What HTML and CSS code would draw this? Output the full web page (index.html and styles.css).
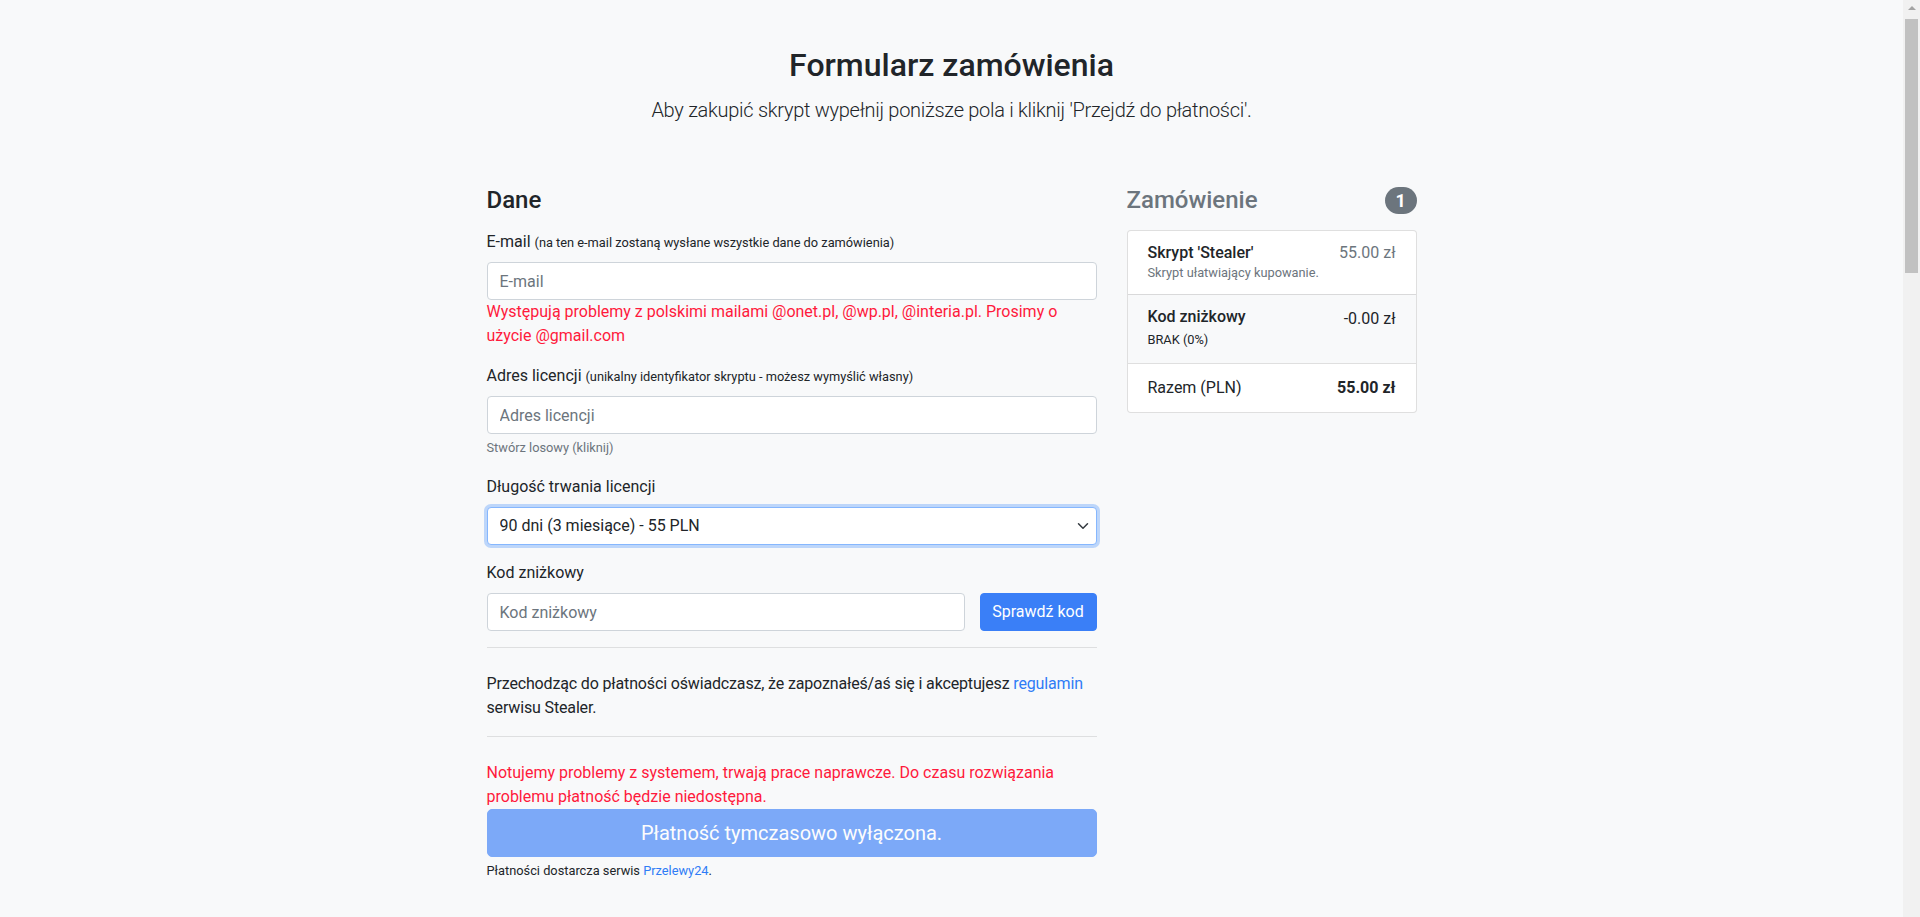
FILE: index.html
```html
<!DOCTYPE html>
<html lang="pl">
<head>
<meta charset="utf-8">
<title>Formularz zamówienia</title>
<link rel="stylesheet" href="styles.css">
</head>
<body>
<div class="page">
  <div class="container">
    <header class="hero">
      <h2 class="hero-title">Formularz zamówienia</h2>
      <p class="lead">Aby zakupić skrypt wypełnij poniższe pola i kliknij 'Przejdź do płatności'.</p>
    </header>

    <div class="row">
      <main class="col-main">
        <h4 class="section-title">Dane</h4>
        <form class="order-form">
          <div class="field">
            <label class="field-label">E-mail <small class="label-note">(na ten e-mail zostaną wysłane wszystkie dane do zamówienia)</small></label>
            <input class="form-control" type="text" placeholder="E-mail">
            <p class="danger-text">Występują problemy z polskimi mailami @onet.pl, @wp.pl, @interia.pl. Prosimy o użycie @gmail.com</p>
          </div>

          <div class="field field-hint">
            <label class="field-label">Adres licencji <small class="label-note">(unikalny identyfikator skryptu - możesz wymyślić własny)</small></label>
            <input class="form-control" type="text" placeholder="Adres licencji">
            <small class="form-text">Stwórz losowy (kliknij)</small>
          </div>

          <div class="field">
            <label class="field-label">Długość trwania licencji</label>
            <div class="select-wrap">
              <select class="form-control form-select is-focused">
                <option>90 dni (3 miesiące) - 55 PLN</option>
              </select>
              <svg class="select-arrow" viewBox="0 0 16 16" width="12" height="12" aria-hidden="true"><path d="M2 5l6 6 6-6" fill="none" stroke="#343a40" stroke-width="2" stroke-linecap="round" stroke-linejoin="round"/></svg>
            </div>
          </div>

          <div class="field">
            <label class="field-label">Kod zniżkowy</label>
            <div class="code-row">
              <input class="form-control code-input" type="text" placeholder="Kod zniżkowy">
              <button type="button" class="btn btn-primary code-btn">Sprawdź kod</button>
            </div>
          </div>

          <hr class="divider">

          <p class="terms">Przechodząc do płatności oświadczasz, że zapoznałeś/aś się i akceptujesz <a class="link" href="#">regulamin</a> serwisu Stealer.</p>

          <hr class="divider">

          <p class="danger-text">Notujemy problemy z systemem, trwają prace naprawcze. Do czasu rozwiązania problemu płatność będzie niedostępna.</p>
          <button type="button" class="btn btn-primary btn-lg btn-block" disabled>Płatność tymczasowo wyłączona.</button>
          <small class="provider">Płatności dostarcza serwis <a class="link" href="#">Przelewy24</a>.</small>
        </form>
      </main>

      <aside class="col-side">
        <h4 class="side-title"><span>Zamówienie</span><span class="badge">1</span></h4>
        <ul class="list-group">
          <li class="list-item condensed">
            <div>
              <h6 class="item-title">Skrypt 'Stealer'</h6>
              <small class="muted">Skrypt ułatwiający kupowanie.</small>
            </div>
            <span class="muted">55.00 zł</span>
          </li>
          <li class="list-item item-light">
            <div>
              <h6 class="item-title">Kod zniżkowy</h6>
              <small>BRAK (0%)</small>
            </div>
            <span>-0.00 zł</span>
          </li>
          <li class="list-item">
            <span>Razem (PLN)</span>
            <strong>55.00 zł</strong>
          </li>
        </ul>
      </aside>
    </div>
  </div>
</div>

<div class="scrollbar" aria-hidden="true">
  <svg class="scroll-arrow" viewBox="0 0 8 4" width="8" height="4"><path d="M0 4L4 0L8 4Z" fill="#a3a3a3"/></svg>
  <div class="scroll-thumb"></div>
</div>
</body>
</html>
```

FILE: styles.css
```css
body {
  margin: 0;
  background: #f8f9fa;
  color: #212529;
  font-family: "Segoe UI", Roboto, "Helvetica Neue", Arial, "Noto Sans", sans-serif;
  font-size: 16px;
  line-height: 1.5;
}

.page {
  margin-right: 17px;
}

.scrollbar {
  position: fixed;
  top: 0;
  right: 0;
  width: 17px;
  height: 100%;
  background: #f1f1f1;
  display: flex;
  flex-direction: column;
  align-items: center;
}

.scroll-arrow {
  margin-top: 6px;
  width: 8px;
  height: 4px;
}

.scroll-thumb {
  margin-top: 9px;
  width: 13px;
  height: 254px;
  background: #c1c1c1;
}

.container {
  max-width: 960px;
  margin: 0 auto;
  padding: 0 15px;
  box-sizing: border-box;
}

.hero {
  text-align: center;
  padding: 46px 0 45px;
}

.hero-title {
  margin: 0 0 11px;
  font-size: 32px;
  font-weight: 500;
  line-height: 1.2;
}

.lead {
  margin: 0 0 16px;
  font-size: 20px;
  font-weight: 300;
  letter-spacing: -0.28px;
}

.row {
  display: flex;
  gap: 30px;
  align-items: flex-start;
}

.col-main {
  flex: 0 0 610px;
}

.col-side {
  flex: 0 0 290px;
}

.section-title {
  margin: 0 0 15px;
  font-size: 24px;
  font-weight: 500;
  line-height: 1.2;
}

.field {
  margin-bottom: 16px;
}

.field-hint {
  margin-bottom: 18px;
}

.field-label {
  display: inline-block;
  margin-bottom: 8px;
}

.label-note {
  font-size: 80%;
}

.form-control {
  display: block;
  width: 100%;
  height: 38px;
  box-sizing: border-box;
  padding: 6px 12px;
  font-family: inherit;
  font-size: 16px;
  line-height: 1.5;
  color: #212529;
  background: #fff;
  border: 1px solid #ced4da;
  border-radius: 4px;
  outline: none;
}

.form-control::placeholder {
  color: #6c757d;
  opacity: 1;
}

.select-wrap {
  position: relative;
}

.form-select {
  appearance: none;
  -webkit-appearance: none;
  padding-right: 36px;
}

.is-focused {
  border-color: #86b7fe;
  box-shadow: 0 0 0 3px rgba(13, 110, 253, 0.25);
}

.select-arrow {
  position: absolute;
  right: 8px;
  top: 13px;
  width: 12px;
  height: 12px;
  pointer-events: none;
}

.danger-text {
  margin: 0;
  color: #ff1a3c;
}

.form-text {
  display: block;
  margin-top: 4px;
  font-size: 12.8px;
  color: #6c757d;
}

.code-row {
  display: flex;
  gap: 15px;
}

.code-input {
  flex: 0 0 478px;
}

.btn {
  display: inline-block;
  box-sizing: border-box;
  font-family: inherit;
  font-size: 16px;
  line-height: 1.5;
  padding: 6px 12px;
  border: 1px solid transparent;
  border-radius: 4px;
  text-align: center;
  white-space: nowrap;
  cursor: pointer;
}

.btn-primary {
  background: #3a7ff7;
  border-color: #3a7ff7;
  color: #fff;
}

.code-btn {
  flex: 1 1 auto;
  height: 38px;
  padding: 6px 4px;
}

.btn-lg {
  font-size: 20px;
  padding: 8px 16px;
  border-radius: 5px;
}

.btn-block {
  display: block;
  width: 100%;
}

.btn:disabled {
  opacity: 0.65;
  cursor: default;
}

.divider {
  margin: 16px 0 24px;
  border: 0;
  border-top: 1px solid rgba(0, 0, 0, 0.1);
}

.terms {
  margin: 0 0 16px;
  letter-spacing: -0.15px;
}

.link {
  color: #2f7cf6;
  text-decoration: none;
}

.provider {
  display: block;
  margin-top: 4px;
  font-size: 12.8px;
}

.side-title {
  display: flex;
  justify-content: space-between;
  align-items: center;
  margin: 0 0 15px;
  font-size: 24px;
  font-weight: 500;
  line-height: 1.2;
  color: #6c757d;
}

.badge {
  display: inline-block;
  background: #6c757d;
  color: #fff;
  font-size: 18px;
  font-weight: 700;
  line-height: 1;
  padding: 4.5px 10.8px;
  border-radius: 160px;
}

.list-group {
  list-style: none;
  margin: 0 0 16px;
  padding: 0;
  background: #fff;
  border: 1px solid rgba(0, 0, 0, 0.125);
  border-radius: 4px;
}

.list-item {
  display: flex;
  justify-content: space-between;
  padding: 12px 20px;
}

.list-item + .list-item {
  border-top: 1px solid rgba(0, 0, 0, 0.125);
}

.condensed {
  line-height: 1.25;
}

.item-light {
  background: #f8f9fa;
}

.item-title {
  margin: 0;
  font-size: 16px;
  font-weight: 500;
  line-height: 1.2;
}

.list-item small {
  font-size: 12.8px;
}

.muted {
  color: #6c757d;
}

.list-item strong {
  font-weight: 700;
}
```
